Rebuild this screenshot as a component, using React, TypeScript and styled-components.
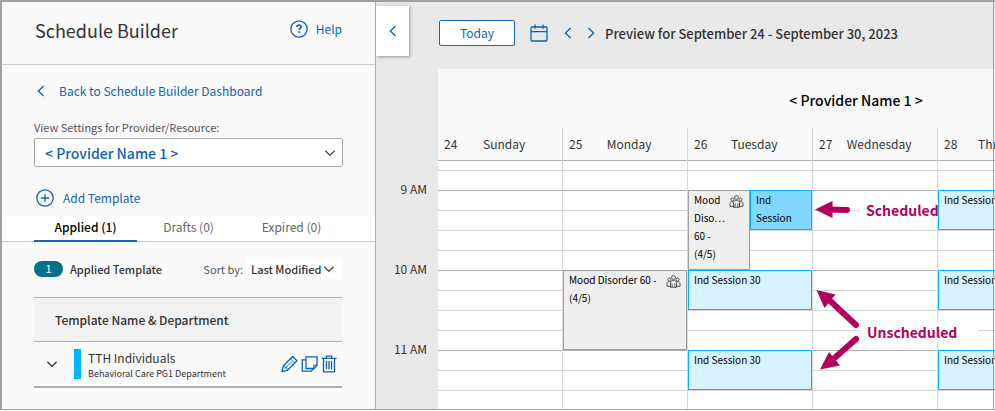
import React from "react";
import styled, { createGlobalStyle, css } from "styled-components";

const BLUE = "#0f62b4";
const MAGENTA = "#b1005d";

const GlobalStyle = createGlobalStyle`
  * { box-sizing: border-box; }
  body { margin: 0; background: #fff; }
  body, button, select, table {
    font-family: "Noto Sans CJK SC", "Noto Sans", sans-serif;
    font-size: 12px;
    line-height: 18px;
    color: #333;
  }
  button { margin: 0; padding: 0; border: 0; background: none; cursor: pointer; }
  h1, h2, p { margin: 0; font-weight: 400; }
  svg { display: block; flex: none; }
`;

const Frame = styled.div`
  position: relative;
  display: flex;
  height: calc(100vh - 1px);
  border: 1px solid #a0a0a0;
  border-top-width: 2px;
  border-left-width: 2px;
  border-right-width: 0;
  overflow: hidden;

  &::after {
    content: "";
    position: absolute;
    inset: 0 1px 0 auto;
    width: 1px;
    background: #a0a0a0;
  }
`;

/* ---------- icons ---------- */

const Line = styled.svg`
  fill: none;
  stroke: currentColor;
  stroke-width: 1.3;
`;

const chevronPaths = {
  left: "M8.6 1 3.4 6l5.2 5",
  right: "M3.4 1l5.2 5-5.2 5",
  down: "M1.4 3.8 6 8.4l4.6-4.6",
};

const Chevron = ({ dir }: { dir: keyof typeof chevronPaths }) => (
  <Line width="12" height="12" viewBox="0 0 12 12" aria-hidden="true">
    <path d={chevronPaths[dir]} />
  </Line>
);

const HelpIcon = () => (
  <Line width="18" height="18" viewBox="0 0 18 18" aria-hidden="true">
    <circle cx="9" cy="9" r="8.2" />
    <path d="M6.9 7.1c0-1.3.9-2 2.1-2s2.1.7 2.1 1.8c0 1.4-1.9 1.5-1.9 3.1" strokeWidth="1.7" />
    <path d="M9.2 11.2v1.8" strokeWidth="1.8" />
  </Line>
);

const PlusIcon = () => (
  <Line width="18" height="18" viewBox="0 0 18 18" aria-hidden="true">
    <circle cx="9" cy="9" r="8.2" />
    <path d="M9 5v8M5 9h8" />
  </Line>
);

const CalendarIcon = () => (
  <Line width="18" height="18" viewBox="0 0 18 18" aria-hidden="true">
    <rect x="1" y="3" width="16" height="14" rx="1" />
    <path d="M1 7.7h16M5 .4v4.4M13 .4v4.4" />
  </Line>
);

const PencilIcon = () => (
  <Line width="17" height="18" viewBox="0 0 17 18" aria-hidden="true">
    <path d="M1 16.600 2.200 11 11.700 1.500 16 5.800 6.500 15.300Z" strokeWidth="1.300" strokeLinejoin="round" />
    <path d="M9.500 3.800 13.700 8M2.200 11c1.600-.2 2.300.5 2.100 2.100 1.500-.2 2.300.6 2.200 2.200M10.600 6.800 4.600 12.800" strokeWidth="1" />
    <path d="M1 16.600l.5-2.200 1.700 1.700Z" fill="currentColor" stroke="none" />
  </Line>
);

const CopyIcon = () => (
  <Line width="17" height="18" viewBox="0 0 17 18" aria-hidden="true">
    <path d="M5 1.800h11v8.700l-3 3H5Z" />
    <path d="M16 10.300h-3.200v3.200" strokeWidth="1.100" />
    <path d="M5 4.800H1.300v11.400h8.700l2.700-2.700" />
  </Line>
);

const TrashIcon = () => (
  <Line width="16" height="18" viewBox="0 0 16 18" aria-hidden="true">
    <path d="M.5 3.400h15M5.300 3V1.200h5.400V3M2.500 3.500v13.300h11V3.500M5.500 6v8.300M8 6v8.300M10.500 6v8.300" />
  </Line>
);

const GroupIcon = () => (
  <Line width="15" height="13" viewBox="0 0 14 13" aria-hidden="true">
    <g strokeWidth=".9">
      <circle cx="7" cy="2.500" r="1.900" />
      <circle cx="2.900" cy="4.500" r="1.500" />
      <circle cx="11.100" cy="4.500" r="1.500" />
      <path d="M4 12.300V8c0-1.600 1-2.500 3-2.500s3 .9 3 2.500v4.300H4M4 11.300H.5V8.600c0-1.300.9-2 2.900-2M10 11.300h3.500V8.600c0-1.300-.9-2-2.900-2M5.600 8.500v3.500M8.400 8.500v3.500" />
    </g>
  </Line>
);

/* ---------- left panel ---------- */

const Sidebar = styled.aside`
  display: flex;
  flex-direction: column;
  flex: 0 0 374px;
  border-right: 1px solid #b0b0b0;
  background: #fafafa;
`;

const SidebarHeader = styled.header`
  display: flex;
  align-items: center;
  justify-content: space-between;
  height: 63px;
  padding: 0 33px 8px 33px;
  border-bottom: 1px solid #ccc;
`;

const Title = styled.h1`
  padding-top: 2px;
  font-size: 18px;
  line-height: 26px;
`;

const actionStyle = css`
  display: inline-flex;
  align-items: center;
  color: ${BLUE};
  text-decoration: none;
`;

const IconLink = styled.a<{ $gap: number }>`
  ${actionStyle}
  gap: ${(p) => p.$gap}px;
`;

const AddButton = styled.button`
  ${actionStyle}
  gap: 9px;
  margin: 22px 0 0 2px;
`;

const Settings = styled.div`
  display: flex;
  flex-direction: column;
  align-items: flex-start;
  padding: 17px 32px 9px;
`;

const BackRow = styled.div`
  display: flex;
  padding-left: 1px;
`;

const FieldLabel = styled.label`
  margin: 18px 0 2px;
  font-size: 11px;
  color: #555;
`;

const SelectWrap = styled.div<{ $wide?: boolean }>`
  display: flex;
  align-items: center;
  position: relative;
  ${(p) => p.$wide && css`width: 100%;`}

  svg {
    position: absolute;
    right: 7px;
    pointer-events: none;
    color: #444;
  }
`;

const ProviderSelect = styled.select`
  appearance: none;
  width: 100%;
  height: 29px;
  padding: 0 30px 0 10px;
  border: 1px solid #aaa;
  border-radius: 2px;
  background: #fff;
  color: ${BLUE};
  font-size: 14px;
  font-weight: 500;
`;

const TabList = styled.div`
  display: flex;
  padding: 0 32px;
  border-bottom: 1px solid #ccc;
  background: #fff;
`;

const Tab = styled.button<{ $active?: boolean }>`
  flex: 1;
  height: 26px;
  padding-bottom: 2px;
  margin-bottom: -1px;
  border-bottom: 2px solid ${(p) => (p.$active ? "#1068b8" : "transparent")};
  color: ${(p) => (p.$active ? "#000" : "#666")};
  font-weight: ${(p) => (p.$active ? 500 : 400)};
`;

const SummaryRow = styled.div`
  display: flex;
  align-items: center;
  padding: 17px 33px 18px 32px;
  font-size: 11px;
`;

const Badge = styled.span`
  width: 29px;
  height: 16px;
  margin-right: 7px;
  border-radius: 8px;
  background: #00708c;
  color: #fff;
  line-height: 15px;
  text-align: center;
`;

const SummaryText = styled.span`
  flex: 1;
  font-weight: 500;
`;

const SortLabel = styled.label`
  margin-right: 3px;
  color: #555;
`;

const SortSelect = styled.select`
  appearance: none;
  width: 96px;
  height: 20px;
  padding: 0 0 0 5px;
  border: 0;
  background: #fff;
  font-size: 11px;
  font-weight: 500;
`;

const TableWrap = styled.div`
  padding: 0 33px 0 32px;
`;

const Table = styled.table`
  width: 100%;
  border-collapse: separate;
  border-spacing: 0;
  border-top: 1px solid #b0b0b0;
  border-bottom: 2px solid #b0b0b0;
`;

const HeadCell = styled.th`
  height: 44px;
  padding: 0 21px;
  border-bottom: 1px solid #b0b0b0;
  background: #f2f2f2;
  font-weight: 500;
  text-align: left;
`;

const Cell = styled.td`
  height: 44px;
  padding: 0;
`;

const TemplateRow = styled.div`
  display: flex;
  align-items: center;
  padding: 0 5px 0 12px;
`;

const ColorBar = styled.span`
  width: 7px;
  height: 30px;
  margin: 0 7px 0 16px;
  background: #00b5ff;
`;

const TemplateText = styled.div`
  flex: 1;
`;

const Department = styled.p`
  font-size: 9px;
  line-height: 13px;
`;

const Actions = styled.div`
  display: flex;
  gap: 3px;

  button { color: ${BLUE}; }
`;

/* ---------- right panel ---------- */

const Main = styled.main`
  display: flex;
  flex-direction: column;
  flex: 1;
  min-width: 0;
  background: #e9e9e9;
`;

const Toolbar = styled.div`
  display: flex;
  align-items: flex-start;
  height: 67px;
  padding-top: 4px;

  button { color: ${BLUE}; }
`;

const CollapseButton = styled.button`
  display: grid;
  place-items: center;
  width: 33px;
  height: 50px;
  background: #fff;
  box-shadow: 1px 1px 3px rgba(0, 0, 0, 0.35);
`;

const ToolbarGroup = styled.div`
  display: flex;
  align-items: center;
  height: 26px;
  margin: 14px 0 0 30px;
`;

const TodayButton = styled.button`
  width: 76px;
  height: 26px;
  margin-right: 15px;
  border: 1px solid #1068b8;
  border-radius: 2px;
  background: #fff;
`;

const StepButtons = styled.div`
  display: flex;
  gap: 11px;
  margin: 0 8px 0 14px;
`;

const RangeTitle = styled.h2`
  padding-top: 2px;
  font-size: 13px;
  font-weight: 500;
  white-space: nowrap;
`;

const Calendar = styled.div`
  display: flex;
  flex: 1;
  min-height: 0;
`;

const TimeAxis = styled.div`
  flex: 0 0 62px;
  padding: 111px 11px 0 0;
  text-align: right;
`;

const TimeLabel = styled.div`
  height: 80px;
`;

const Board = styled.div`
  position: relative;
  flex: 1;
  min-width: 0;
  overflow: hidden;
  background: #f9f9f9;
`;

const ProviderName = styled.p`
  width: 836px;
  padding: 22px 0 19px;
  color: #000;
  font-size: 14px;
  font-weight: 500;
  text-align: center;
`;

const Week = styled.div`
  display: flex;
`;

const Day = styled.section`
  flex: 0 0 125px;
  border-right: 1px solid #d8d8d8;
`;

const DayHeader = styled.header`
  display: flex;
  height: 33px;
  padding: 7px 0 0 6px;
  border-bottom: 1px solid #b0b0b0;
`;

const DayName = styled.span`
  flex: 1;
  padding-right: 11px;
  text-align: center;
`;

const DayBody = styled.div`
  display: grid;
  grid-template-columns: 1fr 1fr;
  grid-template-rows: 9px repeat(12, 20px);
  background: #fff;
`;

const Slot = styled.div<{ $row: number; $hour: boolean }>`
  grid-column: 1 / -1;
  grid-row: ${(p) => p.$row};
  border-top: 1px solid ${(p) => (p.$hour ? "#b0b0b0" : "#d8d8d8")};
`;

type Kind = "group" | "booked" | "open";

const kinds: Record<Kind, [string, string]> = {
  group: ["#a0a0a0", "#efefef"],
  booked: ["#00b5ff", "#80d8ff"],
  open: ["#00b5ff", "#d9f2ff"],
};

const Event = styled.article<{ $row: number; $span: number; $cols: string; $kind: Kind }>`
  display: flex;
  justify-content: space-between;
  grid-row: ${(p) => p.$row} / span ${(p) => p.$span};
  grid-column: ${(p) => p.$cols};
  min-width: 0;
  padding: 0 5px;
  border: 1px solid ${(p) => kinds[p.$kind][0]};
  background: ${(p) => kinds[p.$kind][1]};
  color: #000;
  font-size: 10px;
  white-space: nowrap;

  svg { margin-top: 4px; color: #444; }
`;

const Callout = styled.span<{ $top: number; $left: number; $width: number }>`
  position: absolute;
  top: ${(p) => p.$top}px;
  left: ${(p) => p.$left}px;
  width: ${(p) => p.$width}px;
  padding-left: 6px;
  background: #fff;
  color: ${MAGENTA};
  font-size: 14px;
  font-weight: 700;
  line-height: 20px;
  white-space: nowrap;
`;

const Arrows = styled.svg`
  position: absolute;
  top: 121px;
  left: 375px;
  fill: ${MAGENTA};
  stroke: ${MAGENTA};
`;

type Item = { row: number; span: number; cols?: string; kind: Kind; lines: string[] };

const openSession = (row: number): Item => ({ row, span: 2, kind: "open", lines: ["Ind Session 30"] });

const days: { date: number; name: string; items: Item[] }[] = [
  { date: 24, name: "Sunday", items: [] },
  {
    date: 25,
    name: "Monday",
    items: [{ row: 7, span: 4, kind: "group", lines: ["Mood Disorder 60 -", "(4/5)"] }],
  },
  {
    date: 26,
    name: "Tuesday",
    items: [
      { row: 3, span: 4, cols: "1", kind: "group", lines: ["Mood", "Diso…", "60 -", "(4/5)"] },
      { row: 3, span: 2, cols: "2", kind: "booked", lines: ["Ind", "Session"] },
      openSession(7),
      openSession(11),
    ],
  },
  { date: 27, name: "Wednesday", items: [] },
  { date: 28, name: "Thursday", items: [openSession(3), openSession(7), openSession(11)] },
];

const slotRows = Array.from({ length: 12 }, (_, i) => i + 2);

export default function App() {
  return (
    <>
      <GlobalStyle />
      <Frame>
        <Sidebar>
          <SidebarHeader>
            <Title>Schedule Builder</Title>
            <IconLink href="#help" $gap={8}>
              <HelpIcon />
              Help
            </IconLink>
          </SidebarHeader>
          <Settings>
            <BackRow>
              <IconLink href="#dashboard" $gap={12}>
                <Chevron dir="left" />
                Back to Schedule Builder Dashboard
              </IconLink>
            </BackRow>
            <FieldLabel htmlFor="provider">View Settings for Provider/Resource:</FieldLabel>
            <SelectWrap $wide>
              <ProviderSelect id="provider">
                <option>&lt; Provider Name 1 &gt;</option>
              </ProviderSelect>
              <Chevron dir="down" />
            </SelectWrap>
            <AddButton>
              <PlusIcon />
              Add Template
            </AddButton>
          </Settings>
          <TabList role="tablist">
            <Tab role="tab" aria-selected="true" $active>Applied (1)</Tab>
            <Tab role="tab" aria-selected="false">Drafts (0)</Tab>
            <Tab role="tab" aria-selected="false">Expired (0)</Tab>
          </TabList>
          <SummaryRow>
            <Badge>1</Badge>
            <SummaryText>Applied Template</SummaryText>
            <SortLabel htmlFor="sort">Sort by:</SortLabel>
            <SelectWrap>
              <SortSelect id="sort">
                <option>Last Modified</option>
              </SortSelect>
              <Chevron dir="down" />
            </SelectWrap>
          </SummaryRow>
          <TableWrap>
            <Table>
              <thead>
                <tr>
                  <HeadCell scope="col">Template Name &amp; Department</HeadCell>
                </tr>
              </thead>
              <tbody>
                <tr>
                  <Cell>
                    <TemplateRow>
                      <button aria-label="Expand template"><Chevron dir="down" /></button>
                      <ColorBar />
                      <TemplateText>
                        <p>TTH Individuals</p>
                        <Department>Behavioral Care PG1 Department</Department>
                      </TemplateText>
                      <Actions>
                        <button aria-label="Edit"><PencilIcon /></button>
                        <button aria-label="Copy"><CopyIcon /></button>
                        <button aria-label="Delete"><TrashIcon /></button>
                      </Actions>
                    </TemplateRow>
                  </Cell>
                </tr>
              </tbody>
            </Table>
          </TableWrap>
        </Sidebar>

        <Main>
          <Toolbar>
            <CollapseButton aria-label="Collapse panel"><Chevron dir="left" /></CollapseButton>
            <ToolbarGroup>
              <TodayButton>Today</TodayButton>
              <button aria-label="Pick a date"><CalendarIcon /></button>
              <StepButtons>
                <button aria-label="Previous week"><Chevron dir="left" /></button>
                <button aria-label="Next week"><Chevron dir="right" /></button>
              </StepButtons>
              <RangeTitle>Preview for September 24 - September 30, 2023</RangeTitle>
            </ToolbarGroup>
          </Toolbar>
          <Calendar>
            <TimeAxis>
              <TimeLabel>9 AM</TimeLabel>
              <TimeLabel>10 AM</TimeLabel>
              <TimeLabel>11 AM</TimeLabel>
            </TimeAxis>
            <Board>
              <ProviderName>&lt; Provider Name 1 &gt;</ProviderName>
              <Week>
                {days.map((day) => (
                  <Day key={day.date}>
                    <DayHeader>
                      <span>{day.date}</span>
                      <DayName>{day.name}</DayName>
                    </DayHeader>
                    <DayBody>
                      {slotRows.map((row) => (
                        <Slot key={row} $row={row} $hour={row % 4 === 3} />
                      ))}
                      {day.items.map((item, i) => (
                        <Event key={i} $row={item.row} $span={item.span} $cols={item.cols ?? "1 / -1"} $kind={item.kind}>
                          <div>
                            {item.lines.map((line) => (
                              <div key={line}>{line}</div>
                            ))}
                          </div>
                          {item.kind === "group" && <GroupIcon />}
                        </Event>
                      ))}
                    </DayBody>
                  </Day>
                ))}
              </Week>
              <Callout $top={131} $left={422} $width={78}>Scheduled</Callout>
              <Callout $top={253} $left={423} $width={117}>Unscheduled</Callout>
              <Arrows width="50" height="184" viewBox="0 0 50 184" aria-hidden="true">
                <g strokeWidth="6" strokeLinecap="round">
                  <path d="M15 19.500 34 20" />
                  <path d="M14 108 43 135" />
                  <path d="M17 172 43 149" />
                </g>
                <g stroke="none">
                  <path d="M2 19.500 19.500 11V28Z" />
                  <path d="M3.500 100 22.500 104.500 11.500 118Z" />
                  <path d="M7 179.500 16 162 27 175.500Z" />
                </g>
              </Arrows>
            </Board>
          </Calendar>
        </Main>
      </Frame>
    </>
  );
}
